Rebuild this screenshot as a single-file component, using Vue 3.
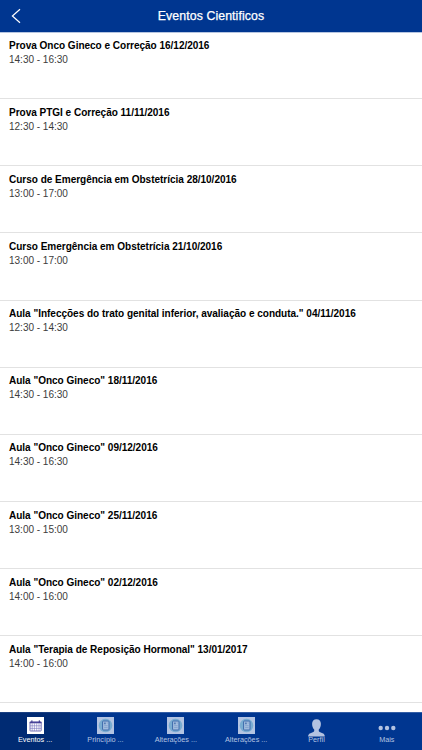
<script setup>
const events = [
  { title: 'Prova Onco Gineco e Correção 16/12/2016', time: '14:30 - 16:30' },
  { title: 'Prova PTGI e Correção 11/11/2016', time: '12:30 - 14:30' },
  { title: 'Curso de Emergência em Obstetrícia 28/10/2016', time: '13:00 - 17:00' },
  { title: 'Curso Emergência em Obstetrícia 21/10/2016', time: '13:00 - 17:00' },
  { title: 'Aula "Infecções do trato genital inferior, avaliação e conduta." 04/11/2016', time: '12:30 - 14:30' },
  { title: 'Aula "Onco Gineco" 18/11/2016', time: '14:30 - 16:30' },
  { title: 'Aula "Onco Gineco" 09/12/2016', time: '14:30 - 16:30' },
  { title: 'Aula "Onco Gineco" 25/11/2016', time: '13:00 - 15:00' },
  { title: 'Aula "Onco Gineco" 02/12/2016', time: '14:00 - 16:00' },
  { title: 'Aula "Terapia de Reposição Hormonal" 13/01/2017', time: '14:00 - 16:00' },
]
const tabs = [
  { label: 'Eventos ...', icon: 'calendar', active: true },
  { label: 'Princípio ...', icon: 'document' },
  { label: 'Alterações ...', icon: 'document' },
  { label: 'Alterações ...', icon: 'document' },
  { label: 'Perfil', icon: 'person' },
  { label: 'Mais', icon: 'more' },
]
</script>

<template>
  <div class="screen">
    <header class="bar">
      <svg class="back" width="10" height="16" viewBox="0 0 10 16">
        <path d="M9 1.2 1.4 8 9 14.8" fill="none" stroke="#fff" stroke-width="1.2" />
      </svg>
      <h1>Eventos Cientificos</h1>
      <span class="back"></span>
    </header>
    <main class="list">
      <article v-for="e in events" :key="e.title" class="row">
        <h2>{{ e.title }}</h2>
        <p>{{ e.time }}</p>
      </article>
    </main>
    <nav class="tabs">
      <div v-for="(t, i) in tabs" :key="i" class="tab" :class="{ active: t.active }">
        <svg v-if="t.icon === 'calendar'" width="17" height="17" viewBox="0 0 17 17">
          <rect width="17" height="17" fill="#fff" />
          <rect x="3" y="5" width="11.2" height="9" rx=".5" fill="#fff" stroke="#5450a6" stroke-width=".8" />
          <path d="M2.7 4.7h11.8v1.6H2.7z" fill="#4a4599" />
          <path d="M3 8.8h11M3 11.4h11M5.2 6.3V14M7.4 6.3V14M9.7 6.3V14M12 6.3V14" stroke="#7976c0" stroke-width=".6" />
          <path d="M4.9 3.3v2.2M12.3 3.3v2.2" stroke="#342f88" stroke-width="1" />
        </svg>
        <svg v-else-if="t.icon === 'document'" width="17" height="17" viewBox="0 0 17 17">
          <rect width="17" height="17" fill="#b3c4e2" />
          <circle cx="8.5" cy="8.5" r="6.8" fill="#78acd1" />
          <rect x="5.6" y="4" width="6.4" height="9" rx=".8" fill="#a5bfdf" stroke="#3c69ac" stroke-width="1" />
          <path d="M7.1 5.5h1.6v1.8H7.1z" fill="#4b74b1" />
          <path d="M9.6 6h1.2M7.1 8.7h3.6M7.1 10.6h3.6" stroke="#6d90c3" stroke-width=".6" />
        </svg>
        <svg v-else-if="t.icon === 'person'" class="person" width="17" height="18" viewBox="0 0 17 18">
          <path d="M8.5.2C5.7.2 4.1 2 4.1 4.7c0 2.4.7 4.6 2.1 5.8.2 1.6 0 2.2-1.3 2.8C2.5 14.3.4 14.4.1 17.5h16.8c-.3-3.1-2.4-3.2-4.8-4.2-1.3-.6-1.5-1.2-1.3-2.8 1.4-1.2 2.1-3.4 2.1-5.8C12.9 2 11.3.2 8.5.2z" fill="#b3c3e1" />
        </svg>
        <svg v-else width="18" height="17" viewBox="0 0 18 17">
          <g fill="#b3c3e1"><circle cx="2.7" cy="11" r="2.2" /><circle cx="9" cy="11" r="2.2" /><circle cx="15.3" cy="11" r="2.2" /></g>
        </svg>
        <span>{{ t.label }}</span>
      </div>
    </nav>
  </div>
</template>

<style>
body { margin: 0; background: #fff; }
</style>

<style scoped>
.screen {
  width: 422px;
  height: 750px;
  display: flex;
  flex-direction: column;
  overflow: hidden;
  background: #fff;
  font-family: "Liberation Sans", Arial, sans-serif;
}
.bar {
  position: relative;
  z-index: 1;
  box-sizing: border-box;
  height: 32px;
  flex: none;
  display: flex;
  align-items: center;
  justify-content: space-between;
  padding: 0 11px;
  background: #003690;
  box-shadow: 0 1px #b6c5e0;
}
.back { width: 10px; flex: none; }
h1 {
  margin: 0;
  color: #fff;
  font-size: 12.3px;
  font-weight: 400;
  letter-spacing: .1px;
  -webkit-text-stroke: .25px #fff;
}
.list { flex: 1; min-height: 0; overflow: hidden; }
.row {
  box-sizing: border-box;
  height: 67.15px;
  padding: 6.6px 9px 0;
  border-bottom: 1px solid #e2e2e2;
}
h2, p {
  margin: 0;
  white-space: nowrap;
  font-size: 10.05px;
  letter-spacing: -.03px;
  line-height: 14px;
}
h2 { color: #000; font-weight: 700; }
p { color: #3c3c3c; }
.tabs {
  height: 38px;
  flex: none;
  display: grid;
  grid-template-columns: repeat(6, 1fr);
  background: #003690;
  box-shadow: inset 0 1px rgba(255, 255, 255, .2);
}
.tab {
  display: flex;
  flex-direction: column;
  align-items: center;
  padding-top: 5px;
  color: #b3c3e1;
  font-size: 7.25px;
  line-height: 10px;
  white-space: nowrap;
}
.tab svg { flex: none; display: block; }
.tab span { padding-top: 1px; }
.tab .person { margin: 2px 0 -3px; }
.active { background: #002b73; color: #fff; box-shadow: inset 0 1px rgba(255, 255, 255, .1); }
</style>
